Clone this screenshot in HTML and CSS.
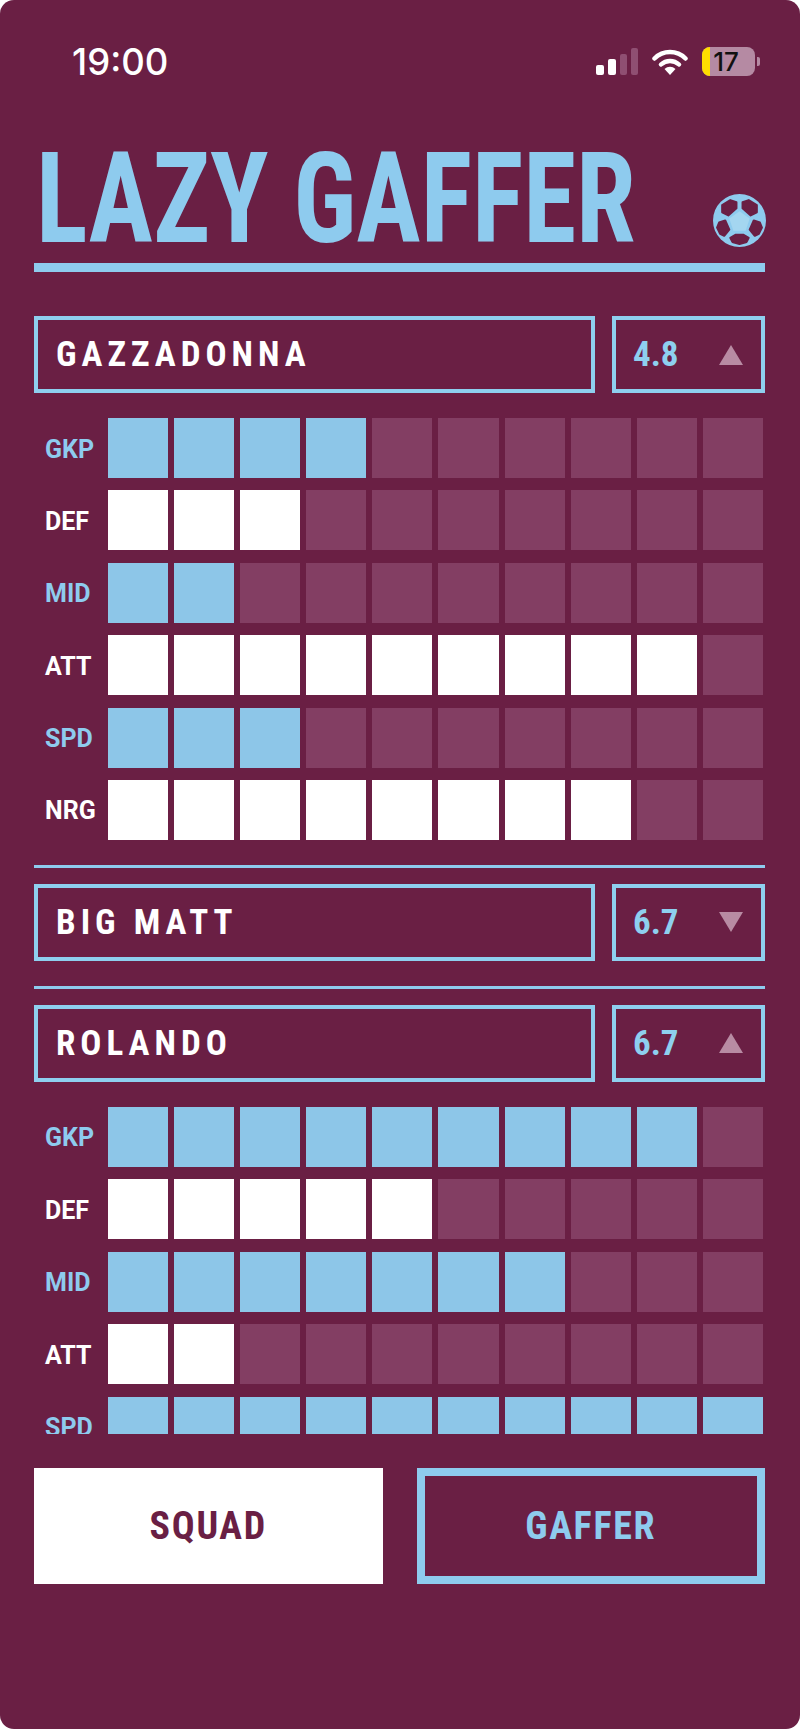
FILE: index.html
```html
<!DOCTYPE html>
<html lang="en">
<head>
    <meta charset="UTF-8">
    <title>Lazy Gaffer</title>
    <link rel="stylesheet" href="styles.css">
</head>
<body>
    <div class="screen">
        <div class="status">
            <span class="time">19:00</span>
            <div class="status-icons">
                <div class="signal">
                    <i class="bar1"></i><i class="bar2"></i><i class="bar3 off"></i><i class="bar4 off"></i>
                </div>
                <svg class="wifi" width="36" height="27" viewBox="0 0 36 27">
                    <path d="M2.5 10.5A22 22 0 0 1 33.500 10.500" fill="none" stroke="#fff" stroke-width="4.500" stroke-linecap="round"/>
                    <path d="M9 16.500A13 13 0 0 1 27 16.500" fill="none" stroke="#fff" stroke-width="4.500" stroke-linecap="round"/>
                    <path d="M18 27L12.500 21A8 8 0 0 1 23.500 21Z" fill="#fff"/>
                </svg>
                <div class="battery">
                    <span class="battery-low"></span>
                    <span class="battery-num">17</span>
                </div>
                <span class="battery-cap"></span>
            </div>
        </div>

        <div class="head">
            <h1 class="title">LAZY GAFFER</h1>
            <svg class="ball" width="53" height="53" viewBox="0 0 52 52">
                <circle cx="26" cy="26" r="26" fill="#8ecbee"/>
                <g fill="#6a1f44" stroke="#6a1f44" stroke-width="2" stroke-linejoin="round">
                    <polygon points="9,11 17,6 23,8 23,14 15,21 9,18"/>
                    <polygon points="43,11 35,6 29,8 29,14 37,21 43,18"/>
                    <polygon points="6,28 12,26 16,35 11,41 7,39 4,33"/>
                    <polygon points="46,28 40,26 36,35 41,41 45,39 48,33"/>
                    <polygon points="17,43 22,40 30,40 35,43 33,47 26,49 19,47"/>
                </g>
                <polygon points="26,17 36,24 32,36 20,36 16,24" fill="#a4d6f0"/>
            </svg>
        </div>

        <div class="list">
            <div class="player">
                <div class="name">GAZZADONNA</div>
                <div class="rating"><span>4.8</span><i class="arrow up"></i></div>
            </div>
            <div class="stats">
                <div class="stat blue"><span class="label">GKP</span><div class="cells"><i class="on"></i><i class="on"></i><i class="on"></i><i class="on"></i><i></i><i></i><i></i><i></i><i></i><i></i></div></div>
                <div class="stat white"><span class="label">DEF</span><div class="cells"><i class="on"></i><i class="on"></i><i class="on"></i><i></i><i></i><i></i><i></i><i></i><i></i><i></i></div></div>
                <div class="stat blue"><span class="label">MID</span><div class="cells"><i class="on"></i><i class="on"></i><i></i><i></i><i></i><i></i><i></i><i></i><i></i><i></i></div></div>
                <div class="stat white"><span class="label">ATT</span><div class="cells"><i class="on"></i><i class="on"></i><i class="on"></i><i class="on"></i><i class="on"></i><i class="on"></i><i class="on"></i><i class="on"></i><i class="on"></i><i></i></div></div>
                <div class="stat blue"><span class="label">SPD</span><div class="cells"><i class="on"></i><i class="on"></i><i class="on"></i><i></i><i></i><i></i><i></i><i></i><i></i><i></i></div></div>
                <div class="stat white"><span class="label">NRG</span><div class="cells"><i class="on"></i><i class="on"></i><i class="on"></i><i class="on"></i><i class="on"></i><i class="on"></i><i class="on"></i><i class="on"></i><i></i><i></i></div></div>
            </div>

            <hr class="sep">

            <div class="player">
                <div class="name">BIG MATT</div>
                <div class="rating"><span>6.7</span><i class="arrow down"></i></div>
            </div>

            <hr class="sep">

            <div class="player">
                <div class="name">ROLANDO</div>
                <div class="rating"><span>6.7</span><i class="arrow up"></i></div>
            </div>
            <div class="stats">
                <div class="stat blue"><span class="label">GKP</span><div class="cells"><i class="on"></i><i class="on"></i><i class="on"></i><i class="on"></i><i class="on"></i><i class="on"></i><i class="on"></i><i class="on"></i><i class="on"></i><i></i></div></div>
                <div class="stat white"><span class="label">DEF</span><div class="cells"><i class="on"></i><i class="on"></i><i class="on"></i><i class="on"></i><i class="on"></i><i></i><i></i><i></i><i></i><i></i></div></div>
                <div class="stat blue"><span class="label">MID</span><div class="cells"><i class="on"></i><i class="on"></i><i class="on"></i><i class="on"></i><i class="on"></i><i class="on"></i><i class="on"></i><i></i><i></i><i></i></div></div>
                <div class="stat white"><span class="label">ATT</span><div class="cells"><i class="on"></i><i class="on"></i><i></i><i></i><i></i><i></i><i></i><i></i><i></i><i></i></div></div>
                <div class="stat blue"><span class="label">SPD</span><div class="cells"><i class="on"></i><i class="on"></i><i class="on"></i><i class="on"></i><i class="on"></i><i class="on"></i><i class="on"></i><i class="on"></i><i class="on"></i><i class="on"></i></div></div>
            </div>
        </div>

        <div class="buttons">
            <button class="btn btn-squad" type="button">SQUAD</button>
            <button class="btn btn-gaffer" type="button">GAFFER</button>
        </div>
    </div>
</body>
</html>
```

FILE: styles.css
```css
html, body {
    margin: 0;
    background-color: #fff;
}
.screen {
    box-sizing: border-box;
    width: 800px;
    height: 1729px;
    padding: 47px 35px 0 34px;
    background-color: #6a1f44;
    border-radius: 14px;
    overflow: hidden;
    font-family: Roboto, "Liberation Sans", sans-serif;
    font-stretch: 75%;
}

/* status bar */
.status {
    display: flex;
    justify-content: space-between;
    align-items: center;
    height: 29px;
    padding: 0 5px 0 38px;
}
.time {
    padding-top: 2px;
    color: #fff;
    font-family: Inter, sans-serif;
    font-size: 36.5px;
    font-weight: 500;
    line-height: 29px;
    font-stretch: 100%;
}
.status-icons {
    display: flex;
    align-items: center;
}
.signal {
    display: flex;
    align-items: flex-end;
    gap: 4px;
    height: 27px;
    margin-right: 14px;
}
.signal i {
    width: 8px;
    border-radius: 2px;
    background-color: #fff;
}
.signal .off {
    width: 7px;
    background-color: #8f4f72;
}
.bar1 { height: 10px; }
.bar2 { height: 16px; }
.bar3 { height: 21px; }
.bar4 { height: 27px; }
.wifi {
    margin-right: 14px;
}
.battery {
    display: flex;
    width: 53px;
    height: 29px;
    border-radius: 8px;
    overflow: hidden;
    background-color: #b58aa3;
}
.battery-low {
    width: 8px;
    background-color: #ffdd00;
}
.battery-num {
    flex: 1;
    padding-right: 13px;
    color: #111;
    font-family: Inter, sans-serif;
    font-size: 26px;
    font-weight: 500;
    line-height: 29px;
    text-align: center;
    font-stretch: 100%;
}
.battery-cap {
    width: 3px;
    height: 9px;
    margin-left: 2px;
    border-radius: 0 2px 2px 0;
    background-color: #b58aa3;
}

/* title */
.head {
    display: flex;
    justify-content: space-between;
    align-items: flex-end;
    height: 187px;
    border-bottom: 9px solid #8ecbee;
}
.title {
    flex: 1;
    min-width: 0;
    margin: 0 0 8px 2px;
    color: #8ecbee;
    font-size: 126px;
    font-weight: 700;
    line-height: 112px;
    white-space: nowrap;
    transform: scaleX(.855);
    transform-origin: left center;
}
.ball {
    flex: none;
    margin: 0 -1px 16px 0;
}

/* players */
.list {
    height: 1118px;
    margin-top: 44px;
    overflow: hidden;
}
.player {
    display: flex;
    gap: 17px;
    height: 77px;
}
.name,
.rating {
    box-sizing: border-box;
    display: flex;
    align-items: center;
    border: 4px solid #8ecfef;
}
.name {
    flex: 1;
    padding-left: 18px;
    color: #fff;
    font-size: 35px;
    font-weight: 700;
    letter-spacing: 5px;
}
.rating {
    justify-content: space-between;
    width: 153px;
    padding: 0 18px 0 17px;
    color: #8ecfef;
    font-size: 35px;
    font-weight: 700;
}
.arrow {
    width: 0;
    height: 0;
    border-left: 12px solid transparent;
    border-right: 12px solid transparent;
}
.arrow.up {
    border-bottom: 20px solid #b88ba3;
}
.arrow.down {
    border-top: 20px solid #b88ba3;
}
.stats {
    display: flex;
    flex-direction: column;
    gap: 12.4px;
    margin-top: 25px;
}
.stat {
    display: flex;
    align-items: center;
    height: 60px;
    padding-right: 2px;
}
.label {
    width: 63px;
    padding: 2px 0 0 11px;
    font-size: 25px;
    font-weight: 700;
    font-stretch: 100%;
}
.cells {
    flex: 1;
    display: grid;
    grid-template-columns: repeat(10, 1fr);
    gap: 6px;
}
.cells i {
    height: 60px;
    background-color: #833e63;
}
.stat.blue .label { color: #8ecbee; }
.stat.blue .on { background-color: #8dc6e8; }
.stat.white .label { color: #fff; }
.stat.white .on { background-color: #fff; }
.sep {
    height: 3px;
    margin: 25px 0 16px;
    border: none;
    background-color: #8ecbee;
}

/* bottom buttons */
.buttons {
    display: grid;
    grid-template-columns: 1fr 1fr;
    gap: 34px;
    margin-top: 34px;
}
.btn {
    box-sizing: border-box;
    height: 116px;
    padding: 0;
    border: none;
    font-family: Roboto, "Liberation Sans", sans-serif;
    font-size: 38px;
    font-weight: 700;
    font-stretch: 75%;
    letter-spacing: 1.7px;
}
.btn-squad {
    background-color: #fff;
    color: #6a1f44;
}
.btn-gaffer {
    border: 8px solid #8ecbee;
    background-color: #6a1f44;
    color: #8ecbee;
}
```
